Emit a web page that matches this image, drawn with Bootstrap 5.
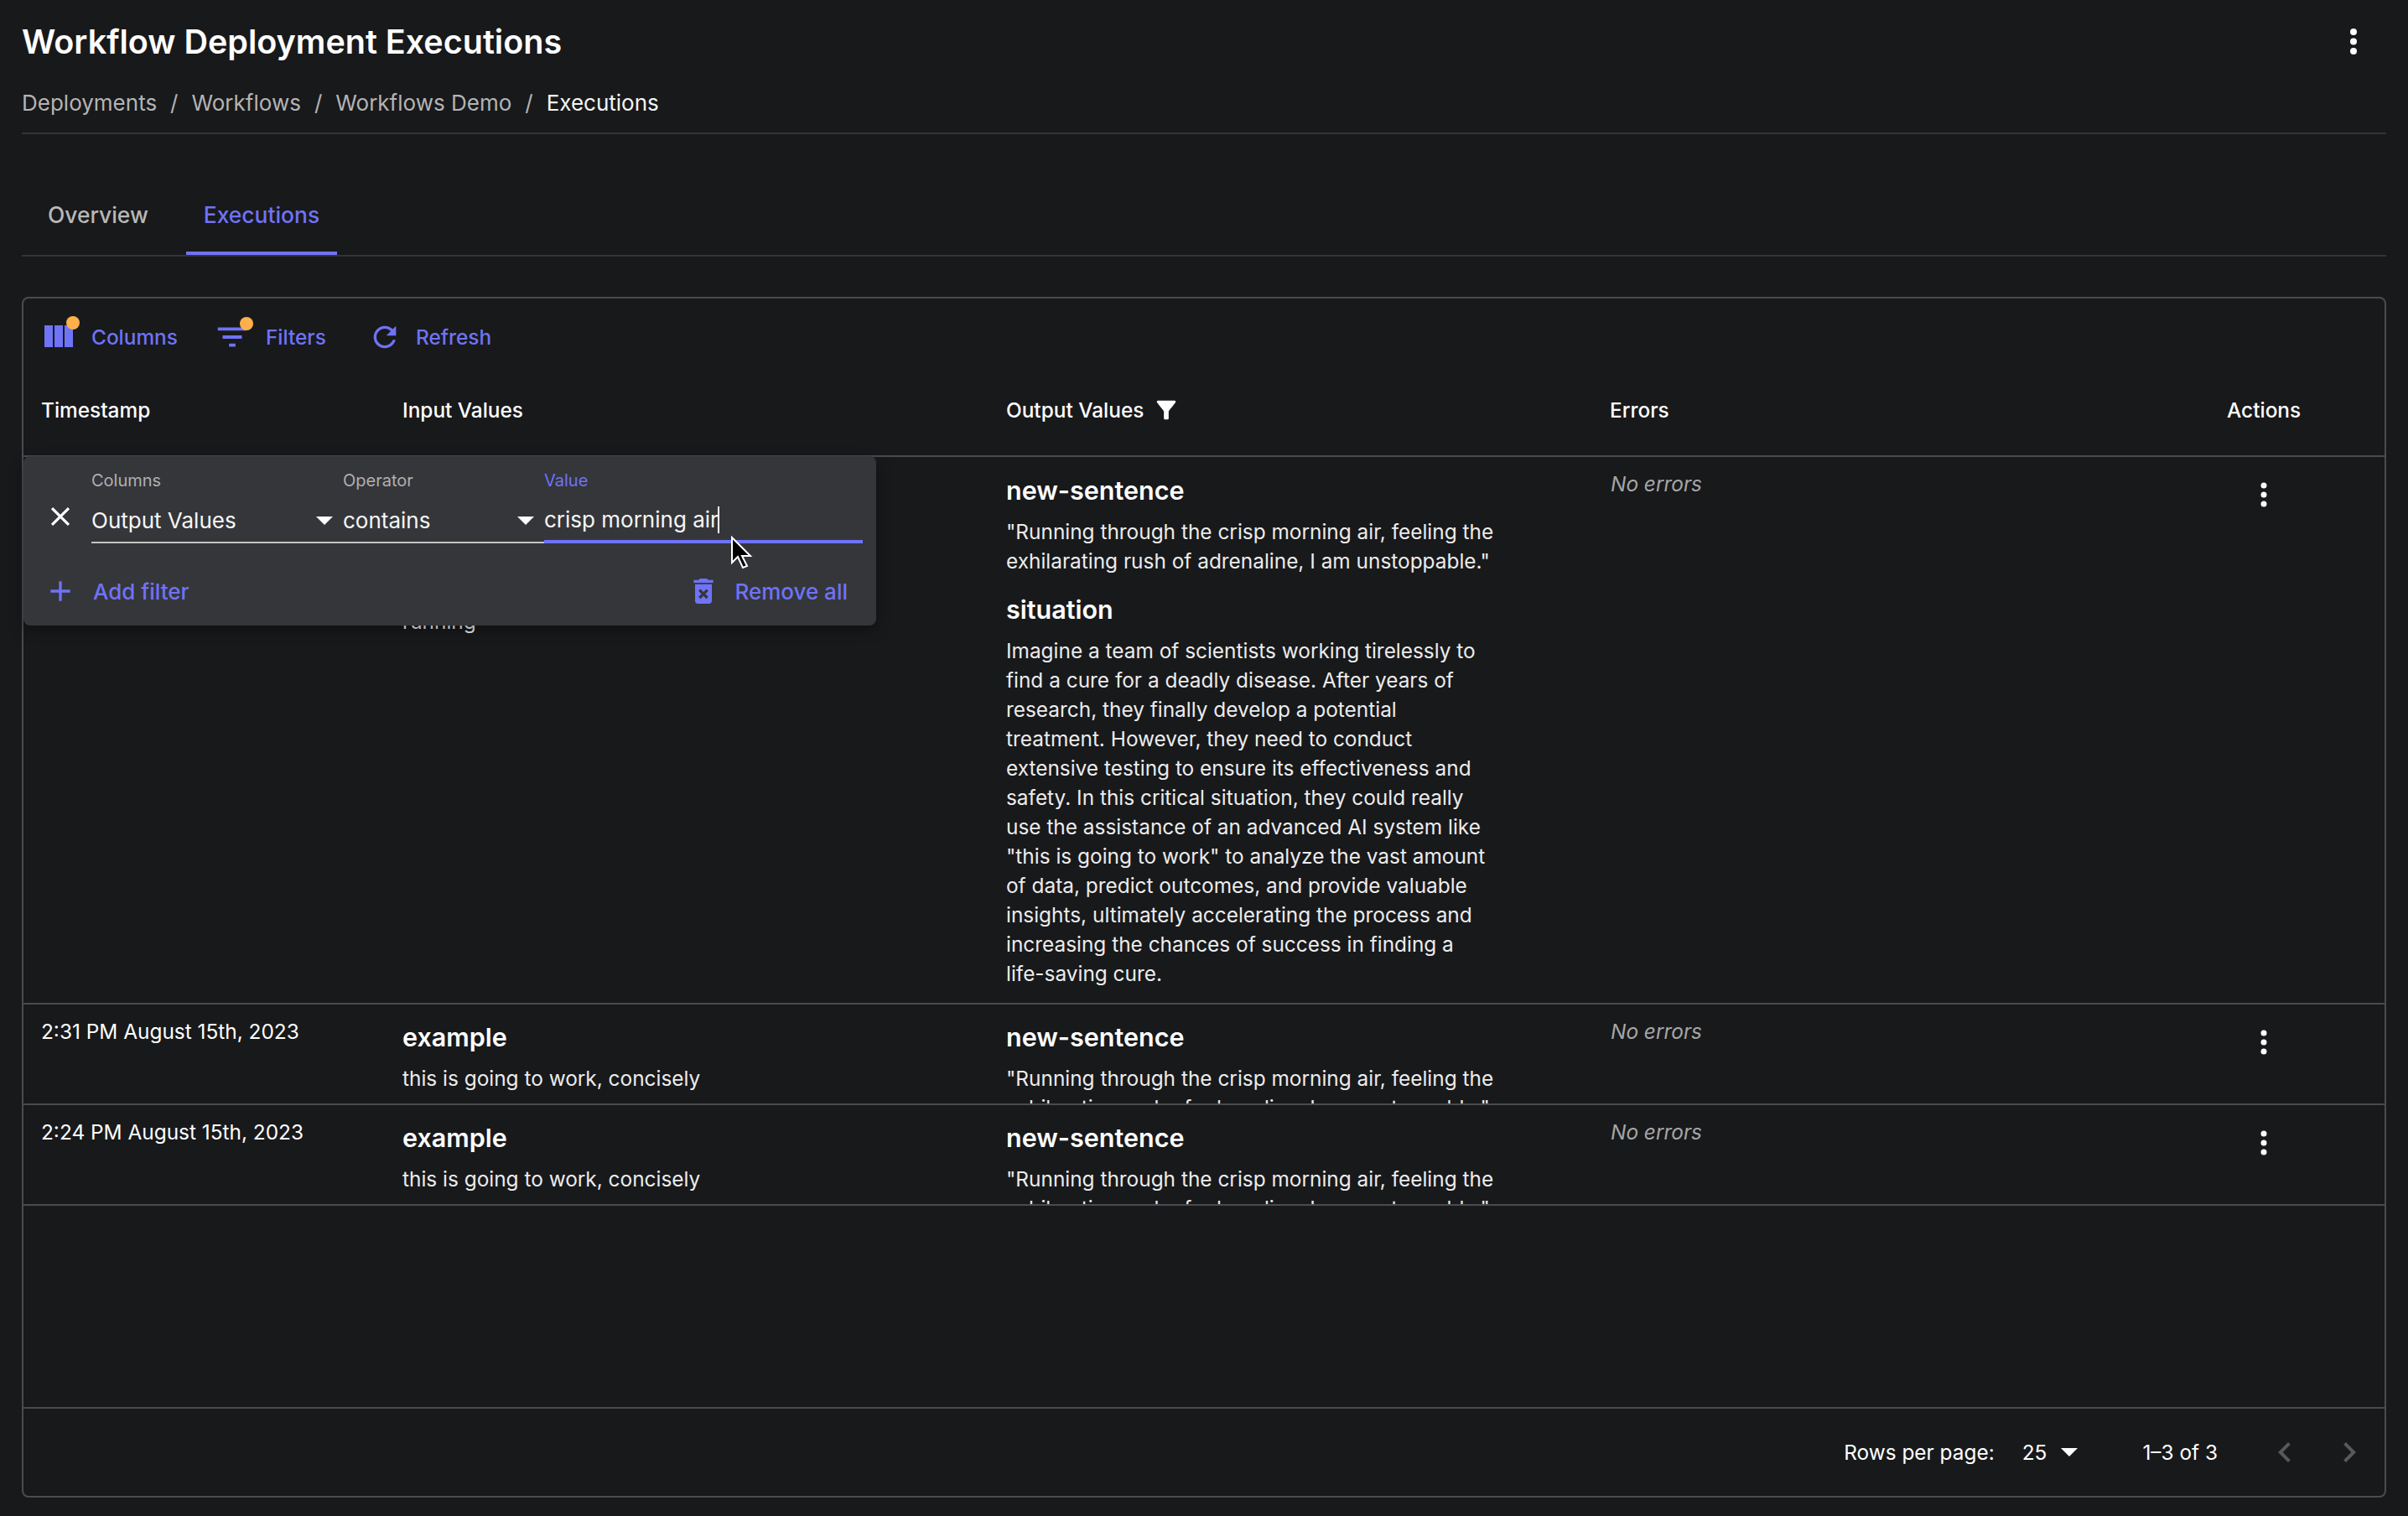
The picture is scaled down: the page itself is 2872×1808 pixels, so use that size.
<!DOCTYPE html>
<html lang="en">
    <head>
        <meta charset="UTF-8" />
        <title>Workflow Deployment Executions</title>
        <link href="https://cdn.jsdelivr.net/npm/bootstrap@5.3.2/dist/css/bootstrap.min.css" rel="stylesheet" />
        <style>
            html, body { height: 100%; }
            body {
                background: #18191b;
                color: #fff;
                font-family: Inter, "Noto Sans", sans-serif;
                font-size: 24.4px;
                line-height: 35px;
                padding: 0 26px;
                overflow: hidden;
            }
            .page-title-row { height: 100px; }
            .page-title { font-size: 39.5px; font-weight: 600; line-height: 50px; margin: 0; }
            .kebab-top { margin-right: 24px; }
            .crumbs { height: 60px; padding: 5px 0 0; margin: 0; border-bottom: 2px solid #333436; font-size: 26px; line-height: 36px; --bs-breadcrumb-margin-bottom: 0; --bs-breadcrumb-divider-color: #b4b4b4; --bs-breadcrumb-item-padding-x: 16px; }
            .crumbs .breadcrumb-item { color: #b4b4b4; }
            .crumbs .breadcrumb-item.active { color: #f4f4f4; }
            .tabs-row { margin-top: 48px; padding-left: 10px; height: 98px; gap: 24px; border-bottom: 2px solid #333436; }
            .tab-item { height: 96px; padding: 0 21px; line-height: 96px; font-size: 26.4px; font-weight: 500; color: #b8b8b8; }
            .tab-item.active { color: #6f73f6; border-bottom: 4px solid #6f73f6; }
            .exec-card { margin-top: 48px; height: 1432px; background: transparent; border: 2px solid #4a4b4e; border-radius: 8px; color: #fff; }
            .tool-row { height: 92px; padding-left: 17px; }
            .tool-btn { font-size: 24.4px; font-weight: 500; color: #6f73f6; gap: 17px; }
            .tool-columns { gap: 16px; margin-right: 42px; }
            .tool-filters { margin-right: 50px; }
            .tool-icon { display: block; fill: #6f73f6; }
            .dot-wrap { position: relative; }
            .dot-orange { position: absolute; top: -1px; right: -2px; width: 16px; height: 16px; border-radius: 50%; background: #ffb04c; }
            .table-zone { overflow: hidden; }
            .exec-table { table-layout: fixed; width: 100%; margin: 0; color: #fff; --bs-table-bg: transparent; --bs-table-color: #fff; }
            .exec-table th { height: 96px; padding: 24px 0 0 21px; vertical-align: top; font-size: 24.4px; line-height: 35px; font-weight: 500; border-bottom: 2px solid #4a4b4e; color: #fff; }
            .exec-table td { padding: 0; vertical-align: top; border-bottom: 2px solid #4a4b4e; color: #fff; }
            .filter-glyph { margin-left: 2px; margin-top: -2px; }
            .cell-in { padding: 15px 0 0 21px; overflow: hidden; }
            .cell-vals { padding: 20px 0 17px 21px; overflow: hidden; }
            .short-row .cell-in, .short-row .cell-vals { height: 118px; padding-bottom: 0; }
            .short-row .cell-vals { padding-top: 19px; }
            .val-name { font-size: 30.5px; line-height: 40px; font-weight: 600; margin: 0 0 12px; }
            .val-text { width: 585px; margin: 0 0 20px; color: #ececec; }
            .exec-table .no-errors { font-style: italic; color: #a6a6a6; padding-left: 22px; }
            .cell-kebab { padding: 27px 0 0 53px; }
            .kebab { display: block; fill: #fff; }
            .foot-row { height: 106px; border-top: 2px solid #4a4b4e; padding-right: 18px; }
            .mini-caret { display: inline-block; width: 0; height: 0; border-left: 10px solid transparent; border-right: 10px solid transparent; border-top: 10px solid #fff; }
            .rows-count { margin-left: 33px; margin-right: 17px; }
            .rows-range { margin-left: 77px; margin-right: 56px; }
            .pager { fill: #58595c; display: block; }
            .pager-next { margin-left: 29px; }
            .filter-pop { position: absolute; left: 0; top: 188px; width: 1017px; height: 202px; background: #35363a; border-radius: 8px; box-shadow: 0 6px 16px rgba(0, 0, 0, 0.35); z-index: 5; }
            .pop-fields { padding: 19px 16px 0 81px; }
            .pop-close { position: absolute; left: 25px; top: 53px; fill: #fff; }
            .pop-label { font-size: 20px; line-height: 20px; color: #b0b0b0; height: 35px; }
            .pop-label.focused { color: #6f73f6; }
            .pop-input { height: 50px; font-size: 26px; line-height: 36px; padding-bottom: 2px; border-bottom: 2px solid #c4c4c4; color: #f6f6f6; }
            .pop-input.focused { border-bottom: 4px solid #6f73f6; }
            .field-col { width: 300px; }
            .field-op { width: 240px; }
            .field-val { width: 380px; }
            .text-caret { border-right: 2px solid #fff; display: inline-block; height: 32px; margin-left: -1px; }
            .select-caret { margin-right: 12px; }
            .pop-actions { padding: 37px 34px 0 24px; font-size: 26px; font-weight: 500; color: #6f73f6; }
            .pop-add { gap: 19px; }
            .pop-remove { gap: 17px; }
            .pop-actions svg { display: block; fill: #6f73f6; }
            .mouse-arrow { position: absolute; left: 843px; top: 283px; z-index: 6; }
        </style>
    </head>

    <body>
        <div class="page-title-row d-flex align-items-center justify-content-between">
            <h1 class="page-title">Workflow Deployment Executions</h1>
            <svg class="kebab-top" width="30" height="40" viewBox="0 0 30 40"><circle cx="15" cy="8" r="4" fill="#fff"/><circle cx="15" cy="19.500" r="4" fill="#fff"/><circle cx="15" cy="31" r="4" fill="#fff"/></svg>
        </div>

        <nav aria-label="breadcrumb">
            <ol class="breadcrumb crumbs">
                <li class="breadcrumb-item">Deployments</li>
                <li class="breadcrumb-item">Workflows</li>
                <li class="breadcrumb-item">Workflows Demo</li>
                <li class="breadcrumb-item active" aria-current="page">Executions</li>
            </ol>
        </nav>

        <div class="tabs-row d-flex">
            <div class="tab-item">Overview</div>
            <div class="tab-item active">Executions</div>
        </div>

        <div class="card exec-card position-relative">
            <div class="tool-row d-flex align-items-center">
                <div class="tool-btn tool-columns d-flex align-items-center">
                    <span class="dot-wrap">
                        <svg class="tool-icon" width="48" height="48" viewBox="0 0 24 24"><path d="M10 18h5V5h-5v13zm-6 0h5V5H4v13zM16 5v13h5V5h-5z"/></svg>
                        <span class="dot-orange"></span>
                    </span>
                    Columns
                </div>
                <div class="tool-btn tool-filters d-flex align-items-center">
                    <span class="dot-wrap">
                        <svg class="tool-icon" width="46" height="46" viewBox="0 0 24 24"><path d="M10 18h4v-2h-4v2zM3 6v2h18V6H3zm3 7h12v-2H6v2z"/></svg>
                        <span class="dot-orange"></span>
                    </span>
                    Filters
                </div>
                <div class="tool-btn d-flex align-items-center">
                    <svg class="tool-icon" width="40" height="40" viewBox="0 0 24 24"><path d="M17.65 6.35C16.2 4.9 14.21 4 12 4c-4.42 0-7.99 3.58-7.99 8s3.57 8 7.99 8c3.73 0 6.84-2.55 7.73-6h-2.08c-.82 2.33-3.04 4-5.65 4-3.31 0-6-2.69-6-6s2.69-6 6-6c1.66 0 3.14.69 4.22 1.78L13 11h7V4l-2.35 2.35z"/></svg>
                    Refresh
                </div>
            </div>

            <div class="table-zone flex-grow-1">
                <table class="table exec-table">
                    <colgroup>
                        <col style="width: 431px" />
                        <col style="width: 720px" />
                        <col style="width: 720px" />
                        <col style="width: 736px" />
                        <col />
                    </colgroup>
                    <thead>
                        <tr>
                            <th>Timestamp</th>
                            <th>Input Values</th>
                            <th>
                                <span class="d-inline-flex align-items-center gap-2">
                                    Output Values
                                    <svg class="filter-glyph" width="34" height="34" viewBox="0 0 24 24" fill="#fff"><path d="M4.25 5.61C6.27 8.2 10 13 10 13v6c0 .55.45 1 1 1h2c.55 0 1-.45 1-1v-6s3.72-4.8 5.74-7.39c.51-.66.04-1.61-.79-1.61H5.04c-.83 0-1.3.95-.79 1.61z"/></svg>
                                </span>
                            </th>
                            <th>Errors</th>
                            <th>Actions</th>
                        </tr>
                    </thead>
                    <tbody>
                        <tr>
                            <td><div class="cell-in">2:38 PM August 15th, 2023</div></td>
                            <td>
                                <div class="cell-vals">
                                    <p class="val-name">example</p>
                                    <p class="val-text">this is going to work, concisely</p>
                                    <p class="val-name">topic</p>
                                    <p class="val-text">running</p>
                                </div>
                            </td>
                            <td>
                                <div class="cell-vals">
                                    <p class="val-name">new-sentence</p>
                                    <p class="val-text">"Running through the crisp morning air, feeling the exhilarating rush of adrenaline, I am unstoppable."</p>
                                    <p class="val-name">situation</p>
                                    <p class="val-text mb-0">Imagine a team of scientists working tirelessly to find a cure for a deadly disease. After years of research, they finally develop a potential treatment. However, they need to conduct extensive testing to ensure its effectiveness and safety. In this critical situation, they could really use the assistance of an advanced AI system like "this is going to work" to analyze the vast amount of data, predict outcomes, and provide valuable insights, ultimately accelerating the process and increasing the chances of success in finding a life-saving cure.</p>
                                </div>
                            </td>
                            <td><div class="cell-in no-errors">No errors</div></td>
                            <td>
                                <div class="cell-kebab">
                                    <svg class="kebab" width="24" height="36" viewBox="0 0 24 36"><circle cx="12" cy="7" r="3.500"/><circle cx="12" cy="18" r="3.500"/><circle cx="12" cy="29" r="3.500"/></svg>
                                </div>
                            </td>
                        </tr>
                        <tr class="short-row">
                            <td><div class="cell-in">2:31 PM August 15th, 2023</div></td>
                            <td>
                                <div class="cell-vals">
                                    <p class="val-name">example</p>
                                    <p class="val-text">this is going to work, concisely</p>
                                </div>
                            </td>
                            <td>
                                <div class="cell-vals">
                                    <p class="val-name">new-sentence</p>
                                    <p class="val-text">"Running through the crisp morning air, feeling the exhilarating rush of adrenaline, I am unstoppable."</p>
                                </div>
                            </td>
                            <td><div class="cell-in no-errors">No errors</div></td>
                            <td>
                                <div class="cell-kebab">
                                    <svg class="kebab" width="24" height="36" viewBox="0 0 24 36"><circle cx="12" cy="7" r="3.500"/><circle cx="12" cy="18" r="3.500"/><circle cx="12" cy="29" r="3.500"/></svg>
                                </div>
                            </td>
                        </tr>
                        <tr class="short-row">
                            <td><div class="cell-in">2:24 PM August 15th, 2023</div></td>
                            <td>
                                <div class="cell-vals">
                                    <p class="val-name">example</p>
                                    <p class="val-text">this is going to work, concisely</p>
                                </div>
                            </td>
                            <td>
                                <div class="cell-vals">
                                    <p class="val-name">new-sentence</p>
                                    <p class="val-text">"Running through the crisp morning air, feeling the exhilarating rush of adrenaline, I am unstoppable."</p>
                                </div>
                            </td>
                            <td><div class="cell-in no-errors">No errors</div></td>
                            <td>
                                <div class="cell-kebab">
                                    <svg class="kebab" width="24" height="36" viewBox="0 0 24 36"><circle cx="12" cy="7" r="3.500"/><circle cx="12" cy="18" r="3.500"/><circle cx="12" cy="29" r="3.500"/></svg>
                                </div>
                            </td>
                        </tr>
                    </tbody>
                </table>
            </div>

            <div class="foot-row d-flex align-items-center justify-content-end">
                <span>Rows per page:</span>
                <span class="rows-count">25</span>
                <span class="mini-caret"></span>
                <span class="rows-range">1–3 of 3</span>
                <svg class="pager" width="48" height="48" viewBox="0 0 24 24"><path d="M15.41 7.41 14 6l-6 6 6 6 1.41-1.41L10.83 12z"/></svg>
                <svg class="pager pager-next" width="48" height="48" viewBox="0 0 24 24"><path d="M10 6 8.590 7.410 13.170 12l-4.580 4.590L10 18l6-6z"/></svg>
            </div>

            <div class="filter-pop">
                <svg class="pop-close" width="38" height="38" viewBox="0 0 24 24"><path d="M19 6.410 17.590 5 12 10.590 6.410 5 5 6.410 10.590 12 5 17.590 6.410 19 12 13.410 17.590 19 19 17.590 13.410 12 19 6.410z"/></svg>
                <div class="pop-fields d-flex">
                    <div class="field-col">
                        <div class="pop-label">Columns</div>
                        <div class="pop-input d-flex align-items-center justify-content-between">Output Values <span class="mini-caret select-caret"></span></div>
                    </div>
                    <div class="field-op">
                        <div class="pop-label">Operator</div>
                        <div class="pop-input d-flex align-items-center justify-content-between">contains <span class="mini-caret select-caret"></span></div>
                    </div>
                    <div class="field-val">
                        <div class="pop-label focused">Value</div>
                        <div class="pop-input focused d-flex align-items-center">crisp morning air<span class="text-caret"></span></div>
                    </div>
                </div>
                <div class="pop-actions d-flex align-items-center justify-content-between">
                    <div class="pop-add d-flex align-items-center">
                        <svg width="40" height="40" viewBox="0 0 24 24"><path d="M19 13h-6v6h-2v-6H5v-2h6V5h2v6h6v2z"/></svg>
                        Add filter
                    </div>
                    <div class="pop-remove d-flex align-items-center">
                        <svg width="40" height="40" viewBox="0 0 24 24"><path d="M6 19c0 1.100.9 2 2 2h8c1.100 0 2-.9 2-2V7H6v12zm2.460-7.120 1.410-1.410L12 12.590l2.120-2.120 1.410 1.410L13.410 14l2.120 2.120-1.410 1.410L12 15.410l-2.120 2.120-1.410-1.410L10.590 14l-2.130-2.120zM15.500 4l-1-1h-5l-1 1H5v2h14V4z"/></svg>
                        Remove all
                    </div>
                </div>
            </div>

            <svg class="mouse-arrow" width="28" height="42" viewBox="0 0 28 42"><path d="M2 2 L2 32 L9 25 L15 38 L20 36 L14 24 L24 24 Z" fill="#000" stroke="#fff" stroke-width="2"/></svg>
        </div>

        <script src="https://cdn.jsdelivr.net/npm/bootstrap@5.3.2/dist/js/bootstrap.bundle.min.js"></script>
    </body>
</html>
